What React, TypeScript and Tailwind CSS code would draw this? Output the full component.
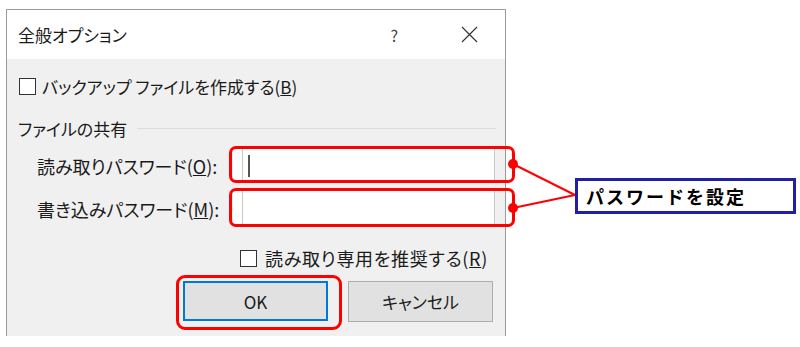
import React from "react";

const font = { fontFamily: '"Noto Sans CJK JP", "Noto Sans", sans-serif' };

function Check() {
  return <div className="w-[17px] h-[17px] border border-[#333] bg-white shrink-0" />;
}

export default function App() {
  return (
    <div className="relative w-[800px] h-[347px] bg-white overflow-hidden text-[#1a1a1a]" style={font}>
      <div className="pt-[9px] pl-[6px]">
        <div className="w-[500px] border-l border-t border-r border-[#9a9a9a] flex flex-col">
          {/* title bar */}
          <div className="h-[49px] bg-white flex items-center pl-[11px] pr-[27px]">
            <span className="text-[17px] leading-none [font-feature-settings:'palt']">全般オプション</span>
            <span className="ml-auto text-[16px] leading-none text-[#444]">?</span>
            <svg className="ml-[63px]" width="17" height="17" viewBox="0 0 17 17">
              <path d="M1 1 L16 16 M16 1 L1 16" stroke="#333" strokeWidth="1.2" fill="none" />
            </svg>
          </div>
          {/* body */}
          <div className="bg-[#f0f0f0] h-[277px] flex flex-col pt-[17px] text-[17px] leading-none [font-feature-settings:'palt']">
            <div className="h-[20px] flex items-center pl-[12px] gap-[6px]">
              <Check />
              <span>
                バックアップ ファイルを作成する(<span className="underline">B</span>)
              </span>
            </div>
            <div className="h-[20px] mt-[22px] flex items-center pl-[11px] pr-[9px] gap-[10px]">
              <span>ファイルの共有</span>
              <div className="flex-1 h-px bg-[#dcdcdc]" />
            </div>
            <div className="h-[35px] mt-[10px] flex items-center">
              <span className="w-[226px] pl-[30px] text-[18px]">
                読み取りパスワード(<span className="underline">O</span>):
              </span>
              <div className="w-[262px] h-full bg-white border-r border-[#c8c8c8] flex">
                <div className="w-[9px]" />
                <div className="flex-1 border-l border-[#c8c8c8] flex items-center pl-[5px]">
                  <div className="w-[2px] h-[22px] bg-[#555]" />
                </div>
              </div>
            </div>
            <div className="h-[35px] mt-[8px] flex items-center">
              <span className="w-[226px] pl-[30px] text-[18px]">
                書き込みパスワード(<span className="underline">M</span>):
              </span>
              <div className="w-[262px] h-full bg-white border-r border-[#c8c8c8] flex">
                <div className="w-[9px]" />
                <div className="flex-1 border-l border-[#c8c8c8]" />
              </div>
            </div>
            <div className="h-[20px] mt-[22px] flex items-center pl-[233px] gap-[8px]">
              <Check />
              <span className="text-[18px] tracking-[0.7px]">
                読み取り専用を推奨する(<span className="underline">R</span>)
              </span>
            </div>
            <div className="mt-[13px] flex pl-[176px] gap-[20px]">
              <div className="w-[145px] h-[40px] bg-[#e1e1e1] border-2 border-[#0078d7] flex items-center justify-center">
                OK
              </div>
              <div className="w-[145px] h-[41px] bg-[#e1e1e1] border border-[#adadad] flex items-center justify-center">
                キャンセル
              </div>
            </div>
          </div>
        </div>
      </div>

      {/* annotations */}
      <div className="absolute left-[229px] top-[146px] w-[286px] h-[37px] border-[3px] border-[#ff0000] rounded-[7px]" />
      <div className="absolute left-[229px] top-[188px] w-[286px] h-[39px] border-[3px] border-[#ff0000] rounded-[7px]" />
      <div className="absolute left-[176px] top-[275px] w-[166px] h-[55px] border-[3px] border-[#ff0000] rounded-[9px]" />
      <svg className="absolute left-0 top-0" width="800" height="347">
        <line x1="513" y1="164" x2="575" y2="195" stroke="#ff0000" strokeWidth="2" />
        <line x1="513" y1="208" x2="575" y2="195" stroke="#ff0000" strokeWidth="2" />
        <circle cx="513" cy="164" r="5" fill="#ff0000" />
        <circle cx="513" cy="208" r="5" fill="#ff0000" />
      </svg>
      <div className="absolute left-[575px] top-[178px] w-[221px] h-[36px] border-[3px] border-[#1f1fa8] bg-white flex items-center pl-[8px]">
        <span className="text-[18px] font-bold tracking-[2px] text-black leading-none">パスワードを設定</span>
      </div>
    </div>
  );
}
